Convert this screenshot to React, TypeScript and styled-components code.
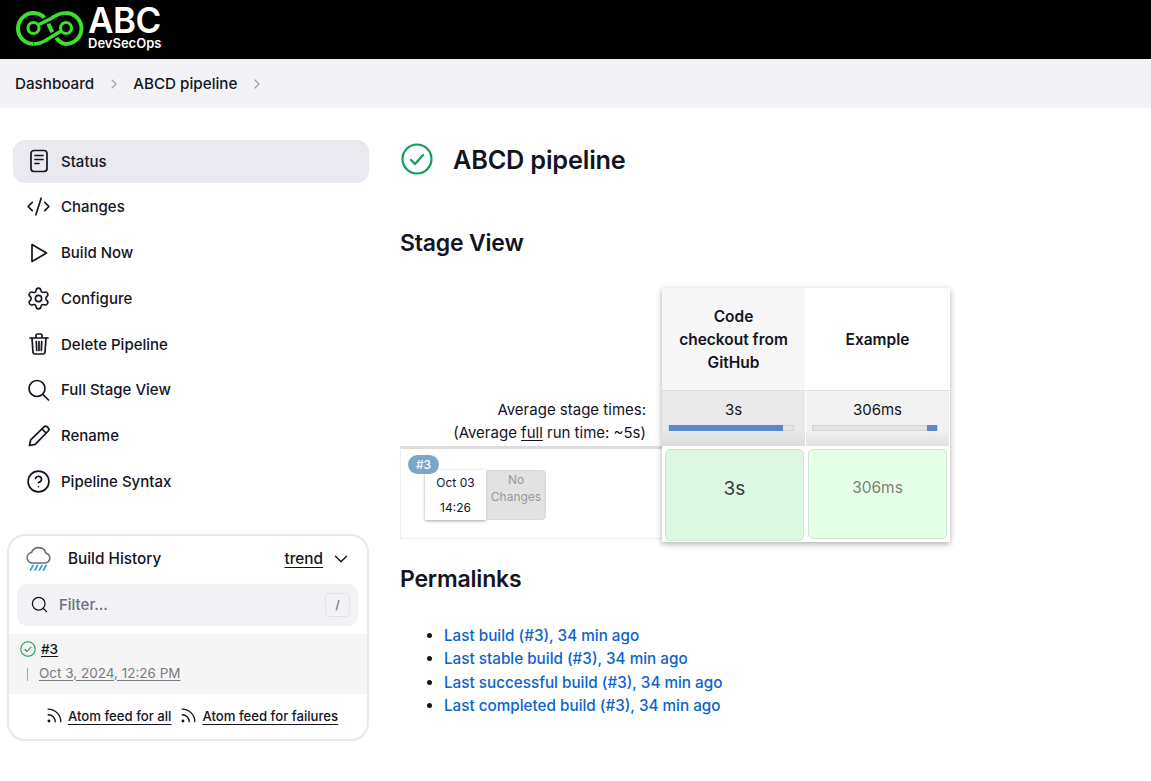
import React from 'react';
import styled, { createGlobalStyle } from 'styled-components';
import { ChevronDown, ChevronRight, Code2, HelpCircle, Rss, Search, Settings } from 'lucide-react';

const GlobalStyle = createGlobalStyle`
  html, body {
    margin: 0;
    padding: 0;
    background: #fff;
    color: #14141f;
    font-family: Inter, "Liberation Sans", sans-serif;
    font-size: 15px;
  }
  * {
    box-sizing: border-box;
  }
`;

const Page = styled.div`
  width: 1151px;
  height: 781px;
  overflow: hidden;
`;

const Header = styled.header`
  height: 59px;
  background: #000;
  display: flex;
  align-items: flex-start;
  padding: 6px 0 0 15px;
  gap: 3px;
`;

const Brand = styled.div`
  display: flex;
  flex-direction: column;
  color: #fff;
`;

const BrandName = styled.span`
  font-size: 35px;
  font-weight: 600;
  line-height: 29px;
  letter-spacing: -0.5px;
`;

const BrandSub = styled.span`
  font-size: 13px;
  font-weight: 600;
  line-height: 14px;
  margin-top: 1px;
`;

const Breadcrumb = styled.nav`
  height: 49px;
  background: #f3f3f7;
  display: flex;
  align-items: center;
  padding-left: 15px;
  font-size: 15.2px;
  font-weight: 450;
  color: #14141f;
`;

const CrumbSep = styled.span`
  display: flex;
  color: #9a9aa8;
  margin: 0 11.5px;
`;

const Body = styled.div`
  display: flex;
  align-items: flex-start;
`;

const Sidebar = styled.aside`
  width: 369px;
  flex: none;
  padding: 31.5px 0 0 7px;
`;

const Nav = styled.div`
  display: grid;
  grid-auto-rows: 43px;
  row-gap: 2.8px;
  margin-left: 6px;
`;

const NavItem = styled.a<{ $active?: boolean }>`
  display: flex;
  align-items: center;
  padding-left: 13px;
  gap: 10px;
  border-radius: 12px;
  background: ${(p) => (p.$active ? '#e9e9ef' : 'transparent')};
  color: #14141f;
  font-size: 15px;
  font-weight: 450;
`;

const NavIcon = styled.span`
  width: 25px;
  height: 25px;
  display: flex;
  align-items: center;
  justify-content: center;
`;

const HistoryCard = styled.section`
  margin-top: 30.5px;
  height: 207px;
  border: 2px solid #e8e8f0;
  border-radius: 18px;
  overflow: hidden;
`;

const HistoryHead = styled.div`
  height: 48px;
  display: flex;
  align-items: center;
  padding: 0 15px 2px 15px;
  font-size: 15.3px;
  font-weight: 450;
`;

const HistoryTitle = styled.span`
  margin-left: 16px;
  flex: 1;
`;

const TrendLink = styled.a`
  text-decoration: underline;
  text-underline-offset: 3px;
  margin-right: 7px;
`;

const FilterBox = styled.div`
  height: 42px;
  margin: 0 9px 0 8px;
  border-radius: 10px;
  background: #f2f2f7;
  display: flex;
  align-items: center;
  padding: 0 8px 0 13px;
  gap: 10px;
  color: #6d6d85;
  font-size: 15px;
  font-weight: 500;
`;

const FilterLabel = styled.span`
  flex: 1;
`;

const KeyHint = styled.span`
  width: 25px;
  height: 24px;
  border: 1px solid #e3e3ec;
  border-radius: 4px;
  display: flex;
  align-items: center;
  justify-content: center;
  font-size: 12px;
`;

const BuildRow = styled.div`
  margin-top: 8px;
  height: 60px;
  background: #f5f5f5;
  padding: 4px 0 0 11px;
`;

const BuildTop = styled.div`
  display: flex;
  align-items: center;
  gap: 5px;
  height: 22px;
`;

const BuildLink = styled.a`
  font-size: 13.5px;
  font-weight: 500;
  text-decoration: underline;
  text-underline-offset: 2px;
`;

const BuildDate = styled.a`
  display: inline-block;
  position: relative;
  margin: 6px 0 0 19px;
  font-size: 13.5px;
  color: #7a7a80;
  line-height: 15px;
  text-decoration: underline;
  text-underline-offset: 2px;

  &::before {
    content: '';
    position: absolute;
    left: -12px;
    top: 2px;
    width: 1px;
    height: 13px;
    background: #a5a5ad;
  }
`;

const Feeds = styled.div`
  height: 44px;
  display: flex;
  align-items: center;
  padding-left: 36px;
  font-size: 13.15px;
  font-weight: 450;
`;

const FeedLink = styled.a`
  display: flex;
  align-items: center;
  gap: 4px;
  margin-right: 8px;

  span {
    text-decoration: underline;
    text-underline-offset: 3px;
  }
`;

const Main = styled.main`
  flex: 1;
  padding: 32px 0 0 31px;
`;

const TitleRow = styled.div`
  display: flex;
  align-items: center;
  gap: 20px;
  height: 38px;
  padding-left: 1px;
`;

const Title = styled.h1`
  margin: 0;
  font-size: 25.3px;
  font-weight: 600;
  letter-spacing: -0.2px;
`;

const SectionTitle = styled.h2<{ $top: number }>`
  margin: ${(p) => p.$top}px 0 0 0;
  font-size: 23px;
  font-weight: 600;
  line-height: 28px;
  letter-spacing: -0.2px;
`;

const StageView = styled.div`
  display: flex;
  align-items: flex-start;
  margin-top: 31px;
`;

const RunColumn = styled.div`
  width: 262px;
  padding-top: 110px;
`;

const AverageLabel = styled.div`
  height: 48px;
  padding-right: 16px;
  text-align: right;
  font-size: 15px;
  line-height: 23px;

  u {
    text-underline-offset: 2px;
  }
`;

const RunRow = styled.div`
  height: 93px;
  border: 1px solid #eeeeee;
  border-top: 3px solid #dcdcdc;
  border-right: 0;
  padding: 6px 0 0 7px;
`;

const BuildBadge = styled.span`
  position: absolute;
  width: 31px;
  height: 19px;
  border-radius: 10px;
  background: #7ea6c9;
  color: #fff;
  font-size: 12px;
  font-weight: 500;
  display: flex;
  align-items: center;
  justify-content: center;
  z-index: 1;
`;

const RunInfo = styled.div`
  display: flex;
  padding: 15px 0 0 17px;
`;

const RunDate = styled.div`
  width: 61px;
  height: 50px;
  background: #fff;
  box-shadow: 0 1px 3px rgba(0, 0, 0, 0.35);
  font-size: 12px;
  text-align: center;
  line-height: 25px;
`;

const RunChanges = styled.div`
  width: 60px;
  height: 50px;
  background: #e2e2e2;
  border-radius: 0 4px 4px 0;
  border: 1px solid #d8d8d8;
  color: #9a9a9a;
  font-size: 12px;
  line-height: 17px;
  text-align: center;
`;

const StageCard = styled.div`
  width: 288px;
  display: grid;
  grid-template-columns: 144px 144px;
  grid-template-rows: 102px 56px 96px;
  box-shadow: 0 2px 6px rgba(0, 0, 0, 0.32);
  background: #fff;
`;

const StageHead = styled.div<{ $odd?: boolean }>`
  display: flex;
  align-items: center;
  justify-content: center;
  text-align: center;
  font-size: 15.5px;
  font-weight: 600;
  line-height: 23px;
  background: ${(p) => (p.$odd ? '#f7f7f7' : '#fff')};
  border-right: 1px solid #fff;
`;

const AvgCell = styled.div<{ $odd?: boolean }>`
  padding-top: 9px;
  text-align: center;
  font-size: 15px;
  line-height: 20px;
  background: ${(p) =>
    p.$odd
      ? 'linear-gradient(#e9e9e9 70%, #dcdcdc)'
      : 'linear-gradient(#f2f2f2 70%, #e2e2e2)'};
  border-top: 1px solid #dedede;
  border-right: 1px solid #fff;
`;

const ProgressTrack = styled.div<{ $end?: boolean }>`
  height: 6px;
  margin: 5px 11px 0 6px;
  background: #e4e4e4;
  border: 1px solid #d4d4d4;
  display: flex;
  justify-content: ${(p) => (p.$end ? 'flex-end' : 'flex-start')};
`;

const ProgressBar = styled.div`
  height: 6px;
  margin-top: -1px;
  background: #5b88c9;
`;

const TimeCell = styled.div<{ $last?: boolean }>`
  padding: ${(p) => (p.$last ? '3px 3px 3px 2px' : '3px 2px 1px 3px')};
  display: flex;
`;

const TimeBox = styled.div<{ $long?: boolean }>`
  flex: 1;
  display: flex;
  align-items: center;
  justify-content: center;
  padding-bottom: 14px;
  border-radius: 5px;
  border: 1px solid #cfe4d2;
  background: ${(p) => (p.$long ? '#def7e3' : '#e6ffe9')};
  color: ${(p) => (p.$long ? '#3a3a3a' : '#7b7f7c')};
  font-size: ${(p) => (p.$long ? '19px' : '15.5px')};
`;

const Permalinks = styled.ul`
  margin: 31px 0 0 0;
  padding: 0 0 0 44px;
  list-style: disc;
`;

const Permalink = styled.li`
  height: 23.4px;
  line-height: 23.4px;
  font-size: 15.25px;
  font-weight: 500;
  color: #0b63ce;

  &::marker {
    color: #14141f;
  }
`;

const IconSvg = styled.svg`
  fill: none;
  stroke: #14141f;
  stroke-width: 1.7;
  stroke-linecap: round;
  stroke-linejoin: round;
`;

const StatusIcon = () => (
  <IconSvg width="24" height="24" viewBox="0 0 24 24">
    <rect x="4" y="1.5" width="16" height="21" rx="3" />
    <path d="M8 6.5h8M8 10.5h8M8 14.5h4" />
  </IconSvg>
);

const PlayIcon = () => (
  <IconSvg width="24" height="24" viewBox="0 0 24 24">
    <path d="M5 3.5L19.5 12 5 20.5z" />
  </IconSvg>
);

const TrashIcon = () => (
  <IconSvg width="24" height="24" viewBox="0 0 24 24">
    <path d="M3 6h18M9 5.5V3.5A1.5 1.5 0 0 1 10.5 2h3A1.5 1.5 0 0 1 15 3.5v2" />
    <path d="M5 6l1 14.5A2 2 0 0 0 8 22h8a2 2 0 0 0 2-1.5L19 6" />
    <path d="M9.3 9.5l.4 9M12 9.5v9M14.7 9.5l-.4 9" />
  </IconSvg>
);

const SearchIcon = () => (
  <IconSvg width="24" height="24" viewBox="0 0 24 24">
    <circle cx="10" cy="10.5" r="8" />
    <path d="M16 16.5L21.5 22" />
  </IconSvg>
);

const PencilIcon = () => (
  <IconSvg width="24" height="24" viewBox="0 0 24 24">
    <path d="M2.5 21.5l1.2-5.7L17 2.8a2.2 2.2 0 0 1 3.1 0l1.1 1.1a2.2 2.2 0 0 1 0 3.1L8.2 20.3z" />
    <path d="M15 5l4 4" />
  </IconSvg>
);

const navItems = [
  { label: 'Status', icon: <StatusIcon />, active: true },
  { label: 'Changes', icon: <Code2 size={25} strokeWidth={1.6} /> },
  { label: 'Build Now', icon: <PlayIcon /> },
  { label: 'Configure', icon: <Settings size={25} strokeWidth={1.5} /> },
  { label: 'Delete Pipeline', icon: <TrashIcon /> },
  { label: 'Full Stage View', icon: <SearchIcon /> },
  { label: 'Rename', icon: <PencilIcon /> },
  { label: 'Pipeline Syntax', icon: <HelpCircle size={25} strokeWidth={1.6} /> },
];

const permalinks = [
  'Last build (#3), 34 min ago',
  'Last stable build (#3), 34 min ago',
  'Last successful build (#3), 34 min ago',
  'Last completed build (#3), 34 min ago',
];

const Logo = () => (
  <svg width="70" height="48" viewBox="0 0 70 48" fill="none" stroke="#3ddf2d" strokeWidth="4">
    {/* the strand that passes under the two connectors */}
    <path d="M18.5 38A15.5 15.5 0 0 1 18.5 7C26 7 30 11 33 17C36 25 43 38 51 38A15.5 15.5 0 0 0 51 7" />
    <path d="M51 7C45 7 41 9 37 12L23 19" stroke="#000" strokeWidth="7" />
    <path d="M18.5 38C25 38 28 36 33 33L46 25" stroke="#000" strokeWidth="7" />
    <path d="M51 7C45 7 41 9 37 12L23 19" strokeWidth="3.6" />
    <path d="M18.5 38C25 38 28 36 33 33L46 25" strokeWidth="3.6" />
    <circle cx="18.5" cy="22" r="5.5" strokeWidth="3.2" />
    <circle cx="51" cy="22" r="5.5" strokeWidth="3.2" />
  </svg>
);

const CheckCircle = ({ size, stroke }: { size: number; stroke: number }) => (
  <svg width={size} height={size} viewBox="0 0 32 32" fill="none" stroke="#0f9d58" strokeWidth={stroke} strokeLinecap="round" strokeLinejoin="round">
    <circle cx="16" cy="16" r="14.5" />
    <path d="M10 17l4 4 8-9" />
  </svg>
);

const RainCloud = () => (
  <svg width="28" height="28" viewBox="0 0 28 28" fill="none" strokeLinecap="round">
    <path d="M8 18h13a5 5 0 0 0 .8-9.9A7.5 7.5 0 0 0 7.5 7.5 5.3 5.3 0 0 0 8 18z" stroke="#6c6f85" strokeWidth="1.7" />
    <path d="M9 20.5l-2.5 4.5M13.5 20.5l-2.5 4.5M18 20.5l-2.5 4.5M22 20.5l-2.5 4.5" stroke="#2f9fe0" strokeWidth="1.7" />
  </svg>
);

export default function App() {
  return (
    <Page>
      <GlobalStyle />
      <Header>
        <Logo />
        <Brand>
          <BrandName>ABC</BrandName>
          <BrandSub>DevSecOps</BrandSub>
        </Brand>
      </Header>
      <Breadcrumb>
        Dashboard
        <CrumbSep><ChevronRight size={16} strokeWidth={1.6} /></CrumbSep>
        ABCD pipeline
        <CrumbSep><ChevronRight size={16} strokeWidth={1.6} /></CrumbSep>
      </Breadcrumb>
      <Body>
        <Sidebar>
          <Nav>
            {navItems.map((item) => (
              <NavItem key={item.label} $active={item.active}>
                <NavIcon>{item.icon}</NavIcon>
                {item.label}
              </NavItem>
            ))}
          </Nav>
          <HistoryCard>
            <HistoryHead>
              <RainCloud />
              <HistoryTitle>Build History</HistoryTitle>
              <TrendLink>trend</TrendLink>
              <ChevronDown size={22} strokeWidth={1.5} />
            </HistoryHead>
            <FilterBox>
              <Search size={19} color="#14141f" strokeWidth={1.6} />
              <FilterLabel>Filter...</FilterLabel>
              <KeyHint>/</KeyHint>
            </FilterBox>
            <BuildRow>
              <BuildTop>
                <CheckCircle size={16} stroke={2.2} />
                <BuildLink>#3</BuildLink>
              </BuildTop>
              <BuildDate>Oct 3, 2024, 12:26 PM</BuildDate>
            </BuildRow>
            <Feeds>
              <FeedLink>
                <Rss size={19} strokeWidth={1.7} />
                <span>Atom feed for all</span>
              </FeedLink>
              <FeedLink>
                <Rss size={19} strokeWidth={1.7} />
                <span>Atom feed for failures</span>
              </FeedLink>
            </Feeds>
          </HistoryCard>
        </Sidebar>
        <Main>
          <TitleRow>
            <CheckCircle size={32} stroke={2.2} />
            <Title>ABCD pipeline</Title>
          </TitleRow>
          <SectionTitle $top={51}>Stage View</SectionTitle>
          <StageView>
            <RunColumn>
              <AverageLabel>
                Average stage times:
                <br />
                (Average <u>full</u> run time: ~5s)
              </AverageLabel>
              <RunRow>
                <BuildBadge>#3</BuildBadge>
                <RunInfo>
                  <RunDate>
                    Oct 03
                    <br />
                    14:26
                  </RunDate>
                  <RunChanges>
                    No
                    <br />
                    Changes
                  </RunChanges>
                </RunInfo>
              </RunRow>
            </RunColumn>
            <StageCard>
              <StageHead $odd>
                Code
                <br />
                checkout from
                <br />
                GitHub
              </StageHead>
              <StageHead>Example</StageHead>
              <AvgCell $odd>
                3s
                <ProgressTrack>
                  <ProgressBar style={{ width: '92%' }} />
                </ProgressTrack>
              </AvgCell>
              <AvgCell>
                306ms
                <ProgressTrack $end>
                  <ProgressBar style={{ width: '8%' }} />
                </ProgressTrack>
              </AvgCell>
              <TimeCell>
                <TimeBox $long>3s</TimeBox>
              </TimeCell>
              <TimeCell $last>
                <TimeBox>306ms</TimeBox>
              </TimeCell>
            </StageCard>
          </StageView>
          <SectionTitle $top={23}>Permalinks</SectionTitle>
          <Permalinks>
            {permalinks.map((link) => (
              <Permalink key={link}>{link}</Permalink>
            ))}
          </Permalinks>
        </Main>
      </Body>
    </Page>
  );
}
